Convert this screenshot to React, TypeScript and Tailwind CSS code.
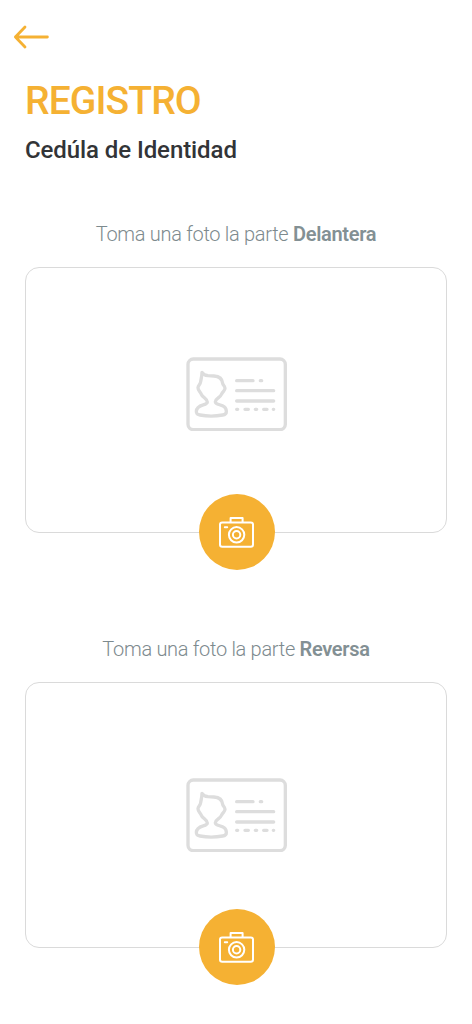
function BackArrow() {
  return (
    <svg
      className="block h-6 w-9"
      viewBox="0 0 36 24"
      fill="none"
      stroke="currentColor"
      strokeWidth="2.8"
      strokeLinecap="round"
      strokeLinejoin="round"
    >
      <path d="M12 2 2.4 12l9.6 10M2.4 12h32" />
    </svg>
  );
}

function IdCardIcon() {
  return (
    <svg
      className="block h-[74px] w-[101px]"
      viewBox="18 21 303 222"
      fill="none"
      stroke="currentColor"
      strokeWidth="10"
      strokeLinecap="round"
      strokeLinejoin="round"
    >
      <rect x="24" y="27" width="292" height="212" rx="16" />
      {/* Person */}
      <path d="M66 67C70 74 75 76 84 77L102 78C118 79 127 88 128 100C128 105 135 107 135 115C135 122 128 125 125 132C121 143 106 145 106 155C106 168 140 160 139 185C139 192 135 194 128 195C107 199 80 199 60 195C51 194 49 191 49 184C50 161 82 168 82 156C82 145 67 143 63 131C60 124 54 121 54 113C54 106 61 104 62 95C63 86 66 80 66 67Z" />
      {/* Text lines */}
      <path d="M170 92h49M241 92h4M170 122h111M170 153h111" />
      <path d="M170 178h3M195 178h10M226 178h4M251 178h10M280 178h1" />
    </svg>
  );
}

function CameraIcon() {
  return (
    <svg
      className="block h-8 w-9"
      viewBox="0 0 36 32"
      fill="none"
      stroke="currentColor"
      strokeWidth="2"
      strokeLinecap="round"
      strokeLinejoin="round"
    >
      <rect x="1" y="6.4" width="33" height="24.4" rx="2.2" />
      <path d="M11.6 6V2h12v4M5.8 11.2h2.4" />
      <circle cx="17.6" cy="18.8" r="7.7" />
      <circle cx="17.6" cy="18.8" r="3.7" />
    </svg>
  );
}

interface PhotoCardProps {
  side: string;
  iconClass?: string;
  className?: string;
}

function PhotoCard({ side, iconClass, className }: PhotoCardProps) {
  return (
    <section className={className}>
      <p className="flex h-8 items-center justify-center whitespace-nowrap text-[20px] font-light tracking-[-0.3px] text-[#7d8a8e]">
        <span>
          Toma una foto la parte <b className="font-semibold text-[#839094]">{side}</b>
        </span>
      </p>
      <div className="relative mt-[17px] flex h-[266px] items-center justify-center rounded-[14px] border border-[#dadada] text-[#dddddd]">
        <div className={iconClass}>
          <IdCardIcon />
        </div>
        <button
          aria-label={side}
          className="absolute -bottom-[38px] left-[173px] flex size-[76px] items-center justify-center rounded-full bg-[#f5b133] text-white"
        >
          <CameraIcon />
        </button>
      </div>
    </section>
  );
}

export default function App() {
  return (
    <main className="h-[1024px] w-[472px] overflow-hidden bg-white font-['Roboto','Liberation_Sans',sans-serif]">
      <header className="pt-[25px] text-[#f5b133]">
        <button aria-label="Volver" className="ml-[13px] block">
          <BackArrow />
        </button>
        <h1 className="mt-[29px] pl-[25px] text-[39px] leading-[46px] font-medium tracking-[-0.9px]">
          REGISTRO
        </h1>
      </header>
      <h2 className="mt-[11px] pl-[25px] text-[24px] leading-[30px] font-medium tracking-[-0.08px] text-[#323437]">
        Cedúla de Identidad
      </h2>

      <div className="px-[25px]">
        <PhotoCard side="Delantera" iconClass="mb-3" className="mt-[53px]" />
        <PhotoCard side="Reversa" className="mt-[100px]" />
      </div>
    </main>
  );
}
